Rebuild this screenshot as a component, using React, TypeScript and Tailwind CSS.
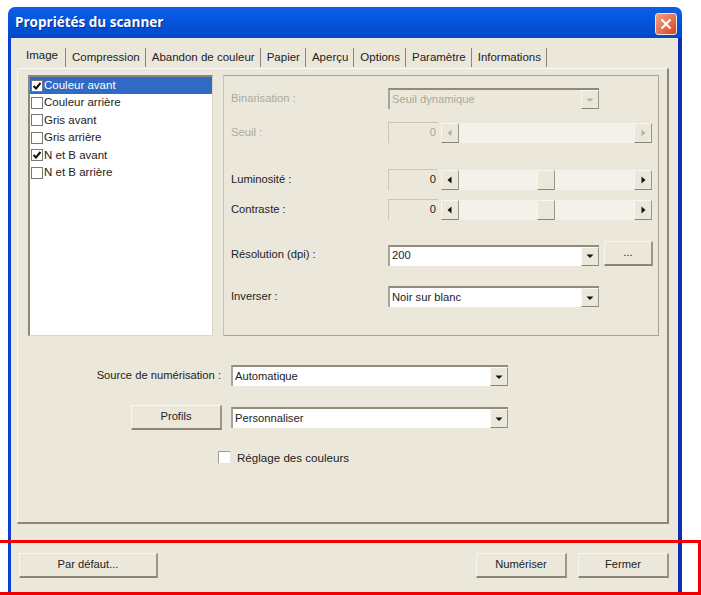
import React from 'react';

const tabs = ['Compression', 'Abandon de couleur', 'Papier', 'Aperçu', 'Options', 'Paramètre', 'Informations'];
const channels = [
  { label: 'Couleur avant', checked: true, selected: true },
  { label: 'Couleur arrière', checked: false },
  { label: 'Gris avant', checked: false },
  { label: 'Gris arrière', checked: false },
  { label: 'N et B avant', checked: true },
  { label: 'N et B arrière', checked: false },
];

const raised =
  'border border-t-[#f7f6f0] border-l-[#f7f6f0] border-r-[#9a9786] border-b-[#8a8776] bg-[#ebe8db]';

const Check: React.FC = () => (
  <svg viewBox="0 0 10 10" className="w-[10px] h-[10px]">
    <path d="M1.5 5 L4 7.5 L8.5 2" fill="none" stroke="#111" strokeWidth="2" />
  </svg>
);

const Arrow: React.FC<{ dir: 'left' | 'right' | 'down'; off?: boolean }> = ({ dir, off }) => {
  const points = dir === 'left' ? '6.5,1.5 2.5,5 6.5,8.5' : dir === 'right' ? '3.5,1.5 7.5,5 3.5,8.5' : '1.5,3.5 8.5,3.5 5,7';
  return (
    <svg viewBox="0 0 10 10" className="w-[10px] h-[10px]">
      <polygon points={points} fill={off ? '#b5b3a6' : '#111'} />
    </svg>
  );
};

const Combo: React.FC<{ value: string; width: string; off?: boolean }> = ({ value, width, off }) => (
  <div
    className={`${width} h-[21px] flex items-center border-2 border-r-0 border-b-0 border-t-[#8f8c7c] border-l-[#a8a596] ${
      off ? 'bg-[#ebe8db] text-[#aaa89a]' : 'bg-white text-[#222]'
    }`}
  >
    <span className="flex-1 pl-[2px] truncate">{value}</span>
    <div className={`w-[18px] h-full flex items-center justify-center ${raised}`}>
      <Arrow dir="down" off={off} />
    </div>
  </div>
);

const Slider: React.FC<{ off?: boolean; thumb?: boolean }> = ({ off, thumb }) => (
  <div className="flex items-center h-[21px]">
    <div
      className={`w-[50px] h-full flex items-center justify-end pr-[2px] border border-t-[#c9c6b8] border-l-[#c9c6b8] border-r-0 border-b-0 ${
        off ? 'text-[#aaa89a]' : 'text-[#222]'
      }`}
    >
      0
    </div>
    <div className="ml-[3px] w-[211px] h-[20px] flex bg-[#f3f1e9]">
      <div className={`w-[18px] h-full flex items-center justify-center ${raised}`}>
        <Arrow dir="left" off={off} />
      </div>
      <div className="flex-1 flex pl-[78px]">
        {thumb && <div className={`w-[18px] h-full ${raised}`} />}
      </div>
      <div className={`w-[18px] h-full flex items-center justify-center ${raised}`}>
        <Arrow dir="right" off={off} />
      </div>
    </div>
  </div>
);

const Button: React.FC<{ label: string; width: string; height?: string }> = ({ label, width, height = 'h-[25px]' }) => (
  <div className={`${width} ${height} flex items-center justify-center text-[#222] ${raised} border-r-2 border-b-2`}>
    {label}
  </div>
);

const Row: React.FC<{ label: string; off?: boolean; top: string; children: React.ReactNode }> = ({
  label,
  off,
  top,
  children,
}) => (
  <div className={`flex items-center ${top}`}>
    <span className={`w-[157px] ${off ? 'text-[#aaa89a]' : 'text-[#222]'}`}>{label}</span>
    {children}
  </div>
);

export default function App() {
  return (
    <div className="w-[701px] h-[595px] bg-white relative overflow-hidden pt-[7px] pl-[8px] font-['Liberation_Sans',Arial,sans-serif] text-[11.2px] leading-none">
      {/* Window */}
      <div className="w-[674px] h-[590px] flex flex-col">
        <div className="h-[31px] shrink-0 rounded-t-[7px] bg-linear-to-b from-[#0b5fe6] via-[#0553dc] to-[#0348c8] flex items-center justify-between pl-[7px] pr-[5px]">
          <span className="font-['Open_Sans',sans-serif] font-bold text-[13.5px] text-white [text-shadow:1px_1px_0_#03339a]">
            Propriétés du scanner
          </span>
          <div className="w-[22px] h-[22px] mt-[3px] rounded-[3px] border border-[#f3e6e0] bg-linear-to-br from-[#f0a080] to-[#d8401c] flex items-center justify-center">
            <svg viewBox="0 0 12 12" className="w-[12px] h-[12px]">
              <path d="M1.5 1.5 L10.5 10.5 M10.5 1.5 L1.5 10.5" stroke="#fff" strokeWidth="2.2" />
            </svg>
          </div>
        </div>

        <div className="flex-1 bg-[#ebe8db] border-l-[3px] border-r-[4px] border-l-[#0a3fd8] border-r-[#0a2fb0] pl-[6px] pr-[9px] pt-[9px]">
          {/* Tabs */}
          <div className="flex items-center h-[21px] pl-[9px] text-[#222] text-[11.5px]">
            <span className="pr-[7px] pb-[3px]">Image</span>
            {tabs.map(t => (
              <span key={t} className="h-[19px] flex items-center pl-[6px] pr-[5px] border-l border-l-[#8a8776] last:border-r last:border-r-[#8a8776]">
                {t}
              </span>
            ))}
          </div>

          {/* Tab panel */}
          <div className="h-[456px] border-t border-t-[#f7f6f0] border-l border-l-[#f7f6f0] border-r-2 border-r-[#8a8776] border-b-2 border-b-[#8a8776] pt-[6px] pl-[10px] pr-[8px]">
            <div className="flex gap-[10px] h-[261px]">
              <div className="w-[185px] h-full bg-white text-[11.5px] border-2 border-r border-b border-t-[#8a8776] border-l-[#8a8776] border-r-[#d8d5c8] border-b-[#d8d5c8]">
                {channels.map(c => (
                  <div key={c.label} className={`h-[17.4px] flex items-center text-[#222] ${c.selected ? 'bg-[#316ac5]' : ''}`}>
                    <div className="w-[12px] h-[12px] ml-[1px] bg-white border border-[#777] flex items-center justify-center shrink-0">
                      {c.checked && <Check />}
                    </div>
                    <span className={`ml-[1px] ${c.selected ? 'text-white' : ''}`}>{c.label}</span>
                  </div>
                ))}
              </div>

              <div className="flex-1 border border-t-[#a8a596] border-l-[#c8c5b6] border-r-[#a8a596] border-b-[#a8a596] pl-[7px] pt-[12px]">
                <Row label="Binarisation :" off top="">
                  <Combo value="Seuil dynamique" width="w-[211px]" off />
                </Row>
                <Row label="Seuil :" off top="mt-[13px]">
                  <Slider off />
                </Row>
                <Row label="Luminosité :" top="mt-[26px]">
                  <Slider thumb />
                </Row>
                <Row label="Contraste :" top="mt-[9px]">
                  <Slider thumb />
                </Row>
                <Row label="Résolution (dpi) :" top="mt-[24px]">
                  <Combo value="200" width="w-[211px]" />
                  <div className="ml-[5px] -mt-[3px]">
                    <Button label="..." width="w-[49px]" />
                  </div>
                </Row>
                <Row label="Inverser :" top="mt-[20px]">
                  <Combo value="Noir sur blanc" width="w-[211px]" />
                </Row>
              </div>
            </div>

            {/* Source and profile */}
            <div className="flex items-center mt-[29px] text-[#222]">
              <span className="w-[194px] text-right pr-[1px]">Source de numérisation :</span>
              <div className="ml-[9px]">
                <Combo value="Automatique" width="w-[277px]" />
              </div>
            </div>
            <div className="flex items-center mt-[19px]">
              <div className="w-[194px] flex justify-end">
                <Button label="Profils" width="w-[91px]" />
              </div>
              <div className="ml-[9px]">
                <Combo value="Personnaliser" width="w-[277px]" />
              </div>
            </div>
            <div className="flex items-center mt-[21px] pl-[190px] text-[#222]">
              <div className="w-[13px] h-[13px] bg-white border border-t-[#a09d8e] border-l-[#a09d8e] border-r-[#e8e6da] border-b-[#e8e6da]" />
              <span className="ml-[6px] text-[11.6px]">Réglage des couleurs</span>
            </div>
          </div>

          {/* Footer buttons */}
          <div className="flex items-center justify-between mt-[29px] pl-[2px]">
            <Button label="Par défaut..." width="w-[139px]" />
            <div className="flex gap-[11px]">
              <Button label="Numériser" width="w-[91px]" />
              <Button label="Fermer" width="w-[91px]" />
            </div>
          </div>
        </div>
      </div>

      {/* Annotation drawn over the screenshot */}
      <div className="absolute left-[-3px] top-[540px] w-[704px] h-[55px] border-[3px] border-[#f00000]" />
    </div>
  );
}
